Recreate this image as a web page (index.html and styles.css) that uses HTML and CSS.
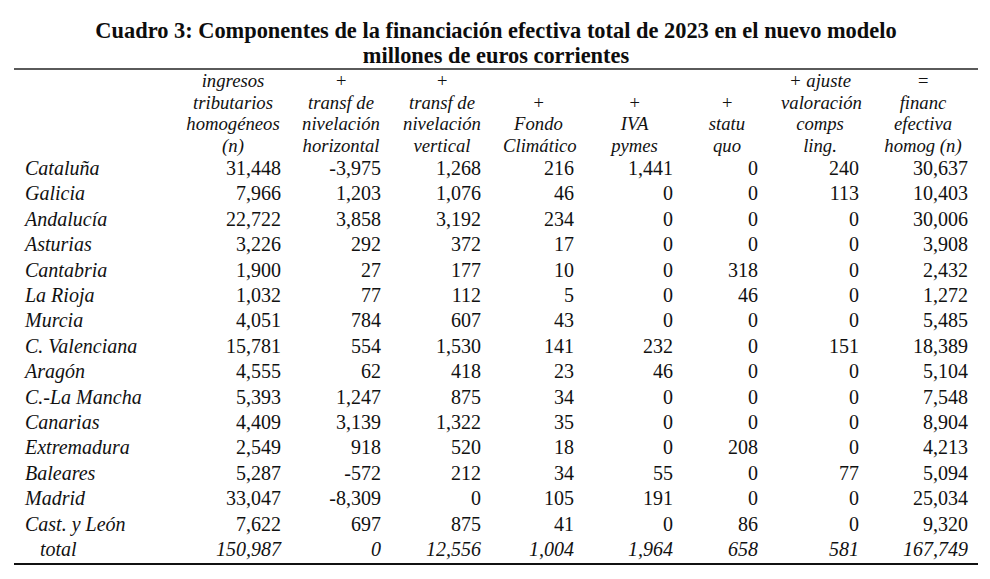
FILE: index.html
```html
<!DOCTYPE html>
<html lang="es">
<head>
<meta charset="utf-8">
<title>Cuadro 3</title>
<link rel="stylesheet" href="styles.css">
</head>
<body>
<div class="page">
  <h1 class="title">Cuadro 3: Componentes de la financiación efectiva total de 2023 en el nuevo modelo<br>millones de euros corrientes</h1>
  <table class="tbl">
    <colgroup>
      <col class="w-name">
      <col class="w-100"><col class="w-100"><col class="w-100">
      <col class="w-93"><col class="w-99"><col class="w-85"><col class="w-101"><col class="w-115">
    </colgroup>
    <thead>
      <tr>
        <th></th>
        <th>ingresos<br>tributarios<br>homogéneos<br>(n)</th>
        <th>+<br>transf de<br>nivelación<br>horizontal</th>
        <th>+<br>transf de<br>nivelación<br>vertical</th>
        <th>+<br>Fondo<br>Climático</th>
        <th>+<br>IVA<br>pymes</th>
        <th>+<br>statu<br>quo</th>
        <th>+ ajuste<br>valoración<br>comps<br>ling.</th>
        <th>=<br>financ<br>efectiva<br>homog (n)</th>
      </tr>
    </thead>
    <tbody>
      <tr><td>Cataluña</td><td>31,448</td><td>-3,975</td><td>1,268</td><td>216</td><td>1,441</td><td>0</td><td>240</td><td>30,637</td></tr>
      <tr><td>Galicia</td><td>7,966</td><td>1,203</td><td>1,076</td><td>46</td><td>0</td><td>0</td><td>113</td><td>10,403</td></tr>
      <tr><td>Andalucía</td><td>22,722</td><td>3,858</td><td>3,192</td><td>234</td><td>0</td><td>0</td><td>0</td><td>30,006</td></tr>
      <tr><td>Asturias</td><td>3,226</td><td>292</td><td>372</td><td>17</td><td>0</td><td>0</td><td>0</td><td>3,908</td></tr>
      <tr><td>Cantabria</td><td>1,900</td><td>27</td><td>177</td><td>10</td><td>0</td><td>318</td><td>0</td><td>2,432</td></tr>
      <tr><td>La Rioja</td><td>1,032</td><td>77</td><td>112</td><td>5</td><td>0</td><td>46</td><td>0</td><td>1,272</td></tr>
      <tr><td>Murcia</td><td>4,051</td><td>784</td><td>607</td><td>43</td><td>0</td><td>0</td><td>0</td><td>5,485</td></tr>
      <tr><td>C. Valenciana</td><td>15,781</td><td>554</td><td>1,530</td><td>141</td><td>232</td><td>0</td><td>151</td><td>18,389</td></tr>
      <tr><td>Aragón</td><td>4,555</td><td>62</td><td>418</td><td>23</td><td>46</td><td>0</td><td>0</td><td>5,104</td></tr>
      <tr><td>C.-La Mancha</td><td>5,393</td><td>1,247</td><td>875</td><td>34</td><td>0</td><td>0</td><td>0</td><td>7,548</td></tr>
      <tr><td>Canarias</td><td>4,409</td><td>3,139</td><td>1,322</td><td>35</td><td>0</td><td>0</td><td>0</td><td>8,904</td></tr>
      <tr><td>Extremadura</td><td>2,549</td><td>918</td><td>520</td><td>18</td><td>0</td><td>208</td><td>0</td><td>4,213</td></tr>
      <tr><td>Baleares</td><td>5,287</td><td>-572</td><td>212</td><td>34</td><td>55</td><td>0</td><td>77</td><td>5,094</td></tr>
      <tr><td>Madrid</td><td>33,047</td><td>-8,309</td><td>0</td><td>105</td><td>191</td><td>0</td><td>0</td><td>25,034</td></tr>
      <tr><td>Cast. y León</td><td>7,622</td><td>697</td><td>875</td><td>41</td><td>0</td><td>86</td><td>0</td><td>9,320</td></tr>
      <tr class="total"><td>total</td><td>150,987</td><td>0</td><td>12,556</td><td>1,004</td><td>1,964</td><td>658</td><td>581</td><td>167,749</td></tr>
    </tbody>
  </table>
</div>
</body>
</html>
```

FILE: styles.css
```css
html, body {
  margin: 0;
  padding: 0;
  background: #ffffff;
}

body {
  font-family: "Liberation Serif", "Times New Roman", serif;
  color: #111111;
}

.page {
  margin-left: 14px;
  width: 964px;
}

.title {
  margin: 18px 0 0;
  font-size: 22.4px;
  line-height: 25px;
  font-weight: bold;
  text-align: center;
  color: #0d0d0d;
}

.tbl {
  width: 964px;
  table-layout: fixed;
  border-collapse: collapse;
  border-spacing: 0;
  border-top: 2px solid #5a5a5a;
  border-bottom: 2px solid #111111;
}

.w-name { width: 171px; }
.w-100 { width: 100px; }
.w-93 { width: 93px; }
.w-99 { width: 99px; }
.w-85 { width: 85px; }
.w-101 { width: 101px; }
.w-115 { width: 115px; }

.tbl th {
  font-style: italic;
  font-weight: normal;
  font-size: 18.7px;
  line-height: 21.5px;
  text-align: center;
  vertical-align: bottom;
  white-space: nowrap;
  padding: 0 4px 0 18px;
}

.tbl td {
  font-size: 20px;
  line-height: 25.4px;
  text-align: right;
  white-space: nowrap;
  padding: 0 4px 0 18px;
}

.tbl th:first-child,
.tbl td:first-child {
  text-align: left;
  font-style: italic;
  padding: 0 0 0 11px;
}

.tbl th:nth-child(2),
.tbl td:nth-child(2) {
  padding-left: 0;
}

.tbl th:nth-child(3) {
  padding-left: 16px;
}

.tbl th:nth-child(7),
.tbl th:nth-child(8) {
  padding-left: 19px;
}

.tbl th:last-child,
.tbl td:last-child {
  padding: 0 10px 0 15px;
}

.tbl .total td {
  font-style: italic;
}

.tbl .total td:first-child {
  padding-left: 26px;
}
```
